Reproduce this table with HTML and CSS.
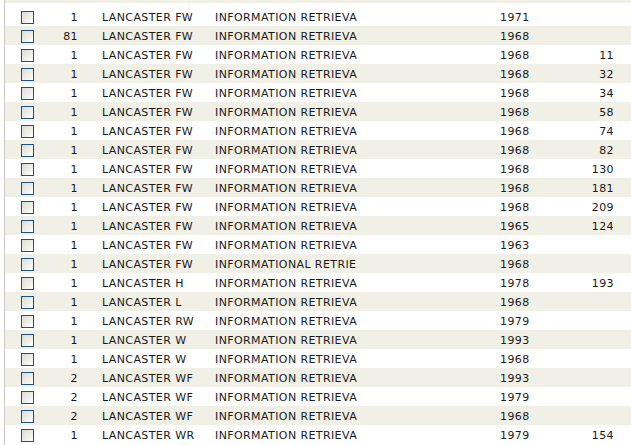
FILE: index.html
```html
<!DOCTYPE html>
<html>
<head>
<meta charset="utf-8">
<link rel="stylesheet" href="styles.css">
</head>
<body>
<div class="list">
  <div class="top-strip"></div>
  <div class="rows">
  <div class="row"><span class="cell cb"><span class="box"></span></span><span class="cell num">1</span><span class="cell name">LANCASTER FW</span><span class="cell title">INFORMATION RETRIEVA</span><span class="cell year">1971</span><span class="cell page"></span></div>
  <div class="row"><span class="cell cb"><span class="box"></span></span><span class="cell num">81</span><span class="cell name">LANCASTER FW</span><span class="cell title">INFORMATION RETRIEVA</span><span class="cell year">1968</span><span class="cell page"></span></div>
  <div class="row"><span class="cell cb"><span class="box"></span></span><span class="cell num">1</span><span class="cell name">LANCASTER FW</span><span class="cell title">INFORMATION RETRIEVA</span><span class="cell year">1968</span><span class="cell page">11</span></div>
  <div class="row"><span class="cell cb"><span class="box"></span></span><span class="cell num">1</span><span class="cell name">LANCASTER FW</span><span class="cell title">INFORMATION RETRIEVA</span><span class="cell year">1968</span><span class="cell page">32</span></div>
  <div class="row"><span class="cell cb"><span class="box"></span></span><span class="cell num">1</span><span class="cell name">LANCASTER FW</span><span class="cell title">INFORMATION RETRIEVA</span><span class="cell year">1968</span><span class="cell page">34</span></div>
  <div class="row"><span class="cell cb"><span class="box"></span></span><span class="cell num">1</span><span class="cell name">LANCASTER FW</span><span class="cell title">INFORMATION RETRIEVA</span><span class="cell year">1968</span><span class="cell page">58</span></div>
  <div class="row"><span class="cell cb"><span class="box"></span></span><span class="cell num">1</span><span class="cell name">LANCASTER FW</span><span class="cell title">INFORMATION RETRIEVA</span><span class="cell year">1968</span><span class="cell page">74</span></div>
  <div class="row"><span class="cell cb"><span class="box"></span></span><span class="cell num">1</span><span class="cell name">LANCASTER FW</span><span class="cell title">INFORMATION RETRIEVA</span><span class="cell year">1968</span><span class="cell page">82</span></div>
  <div class="row"><span class="cell cb"><span class="box"></span></span><span class="cell num">1</span><span class="cell name">LANCASTER FW</span><span class="cell title">INFORMATION RETRIEVA</span><span class="cell year">1968</span><span class="cell page">130</span></div>
  <div class="row"><span class="cell cb"><span class="box"></span></span><span class="cell num">1</span><span class="cell name">LANCASTER FW</span><span class="cell title">INFORMATION RETRIEVA</span><span class="cell year">1968</span><span class="cell page">181</span></div>
  <div class="row"><span class="cell cb"><span class="box"></span></span><span class="cell num">1</span><span class="cell name">LANCASTER FW</span><span class="cell title">INFORMATION RETRIEVA</span><span class="cell year">1968</span><span class="cell page">209</span></div>
  <div class="row"><span class="cell cb"><span class="box"></span></span><span class="cell num">1</span><span class="cell name">LANCASTER FW</span><span class="cell title">INFORMATION RETRIEVA</span><span class="cell year">1965</span><span class="cell page">124</span></div>
  <div class="row"><span class="cell cb"><span class="box"></span></span><span class="cell num">1</span><span class="cell name">LANCASTER FW</span><span class="cell title">INFORMATION RETRIEVA</span><span class="cell year">1963</span><span class="cell page"></span></div>
  <div class="row"><span class="cell cb"><span class="box"></span></span><span class="cell num">1</span><span class="cell name">LANCASTER FW</span><span class="cell title">INFORMATIONAL RETRIE</span><span class="cell year">1968</span><span class="cell page"></span></div>
  <div class="row"><span class="cell cb"><span class="box"></span></span><span class="cell num">1</span><span class="cell name">LANCASTER H</span><span class="cell title">INFORMATION RETRIEVA</span><span class="cell year">1978</span><span class="cell page">193</span></div>
  <div class="row"><span class="cell cb"><span class="box"></span></span><span class="cell num">1</span><span class="cell name">LANCASTER L</span><span class="cell title">INFORMATION RETRIEVA</span><span class="cell year">1968</span><span class="cell page"></span></div>
  <div class="row"><span class="cell cb"><span class="box"></span></span><span class="cell num">1</span><span class="cell name">LANCASTER RW</span><span class="cell title">INFORMATION RETRIEVA</span><span class="cell year">1979</span><span class="cell page"></span></div>
  <div class="row"><span class="cell cb"><span class="box"></span></span><span class="cell num">1</span><span class="cell name">LANCASTER W</span><span class="cell title">INFORMATION RETRIEVA</span><span class="cell year">1993</span><span class="cell page"></span></div>
  <div class="row"><span class="cell cb"><span class="box"></span></span><span class="cell num">1</span><span class="cell name">LANCASTER W</span><span class="cell title">INFORMATION RETRIEVA</span><span class="cell year">1968</span><span class="cell page"></span></div>
  <div class="row"><span class="cell cb"><span class="box"></span></span><span class="cell num">2</span><span class="cell name">LANCASTER WF</span><span class="cell title">INFORMATION RETRIEVA</span><span class="cell year">1993</span><span class="cell page"></span></div>
  <div class="row"><span class="cell cb"><span class="box"></span></span><span class="cell num">2</span><span class="cell name">LANCASTER WF</span><span class="cell title">INFORMATION RETRIEVA</span><span class="cell year">1979</span><span class="cell page"></span></div>
  <div class="row"><span class="cell cb"><span class="box"></span></span><span class="cell num">2</span><span class="cell name">LANCASTER WF</span><span class="cell title">INFORMATION RETRIEVA</span><span class="cell year">1968</span><span class="cell page"></span></div>
  <div class="row"><span class="cell cb"><span class="box"></span></span><span class="cell num">1</span><span class="cell name">LANCASTER WR</span><span class="cell title">INFORMATION RETRIEVA</span><span class="cell year">1979</span><span class="cell page">154</span></div>
  </div>
</div>
</body>
</html>
```

FILE: styles.css
```css
html, body {
  margin: 0;
  padding: 0;
  background: #ffffff;
}
body {
  font-family: "DejaVu Sans", Verdana, sans-serif;
  font-size: 11px;
  letter-spacing: 0.4px;
  color: #1a1a1a;
  overflow: hidden;
}
.list {
  margin-left: 4px;
  border-left: 1px solid #c9c9c9;
  height: 445px;
}
.top-strip {
  height: 3px;
  background: #f0f0e6;
}
.rows {
  padding-top: 4px;
}
.row {
  display: grid;
  grid-template-columns: 50px 23px 137px 285px 60px 54px;
  height: 19px;
  align-items: start;
}
.row:nth-child(even) {
  background: #f0f0e6;
}
.cell {
  white-space: nowrap;
  overflow: hidden;
  line-height: 17px;
  padding-top: 2px;
}
.cb {
  display: flex;
  align-items: center;
  padding-left: 16px;
  padding-top: 4px;
  height: 13px;
}
.box {
  width: 11px;
  height: 11px;
  border: 1px solid #1c5180;
  background: linear-gradient(135deg, #dcdcd7 0%, #f0f0ea 60%, #ffffff 100%);
}
.num {
  text-align: right;
}
.name {
  padding-left: 24px;
}
.page {
  text-align: right;
}
```
